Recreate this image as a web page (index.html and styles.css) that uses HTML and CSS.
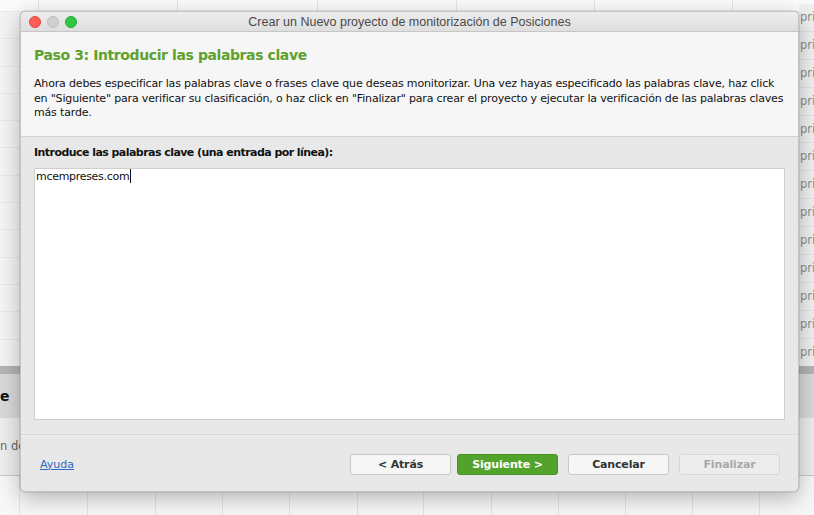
FILE: index.html
```html
<!DOCTYPE html>
<html lang="es">
<head>
<meta charset="utf-8">
<title>Crear un Nuevo proyecto de monitorización de Posiciones</title>
<link rel="stylesheet" href="styles.css">
</head>
<body>
<div class="desktop">
  <div class="bg-top">
    <span class="vline" style="left:38px"></span>
    <span class="vline" style="left:177px"></span>
    <span class="vline" style="left:317px"></span>
    <span class="vline" style="left:456px"></span>
    <span class="vline" style="left:594px"></span>
    <span class="vline" style="left:732px"></span>
  </div>
  <div class="bg-right">
    <div class="prow">pri</div><div class="prow">pri</div><div class="prow">pri</div>
    <div class="prow">pri</div><div class="prow">pri</div><div class="prow">pri</div>
    <div class="prow">pri</div><div class="prow">pri</div><div class="prow">pri</div>
    <div class="prow">pri</div><div class="prow">pri</div><div class="prow">pri</div>
    <div class="prow">pri</div>
  </div>
  <div class="bg-left">
    <div class="lrow"></div><div class="lrow"></div><div class="lrow"></div>
    <div class="lrow"></div><div class="lrow"></div><div class="lrow"></div>
    <div class="lrow"></div><div class="lrow"></div><div class="lrow"></div>
    <div class="lrow"></div><div class="lrow"></div><div class="lrow"></div>
    <div class="lrow"></div>
  </div>
  <div class="band">
    <div class="band-dark"></div>
    <div class="band-mid"><span class="band-e">e</span></div>
    <div class="band-light"><span class="band-nde">n de</span></div>
  </div>
  <div class="bg-bottom">
    <span class="vline" style="left:19px"></span>
    <span class="vline" style="left:87px"></span>
    <span class="vline" style="left:155px"></span>
    <span class="vline" style="left:222px"></span>
    <span class="vline" style="left:289px"></span>
    <span class="vline" style="left:357px"></span>
    <span class="vline" style="left:423px"></span>
    <span class="vline" style="left:491px"></span>
    <span class="vline" style="left:558px"></span>
    <span class="vline" style="left:625px"></span>
    <span class="vline" style="left:692px"></span>
    <span class="vline" style="left:759px"></span>
  </div>

  <div class="window">
    <div class="titlebar">
      <div class="lights">
        <span class="light red"></span>
        <span class="light gray"></span>
        <span class="light green"></span>
      </div>
      <div class="title">Crear un Nuevo proyecto de monitorización de Posiciones</div>
    </div>
    <div class="header">
      <h1 class="step">Paso 3: Introducir las palabras clave</h1>
      <p class="desc">Ahora debes especificar las palabras clave o frases clave que deseas monitorizar. Una vez hayas especificado las palabras clave, haz click en "Siguiente" para verificar su clasificación, o haz click en "Finalizar" para crear el proyecto y ejecutar la verificación de las palabras claves más tarde.</p>
    </div>
    <div class="content">
      <div class="label">Introduce las palabras clave (una entrada por línea):</div>
      <div class="textarea"><span class="typed">mcempreses.com</span><span class="caret"></span></div>
    </div>
    <div class="footer">
      <a class="help" href="#">Ayuda</a>
      <div class="buttons">
        <button class="btn">&lt; Atrás</button>
        <button class="btn primary">Siguiente &gt;</button>
        <button class="btn cancel">Cancelar</button>
        <button class="btn disabled">Finalizar</button>
      </div>
    </div>
  </div>
</div>
</body>
</html>
```
FILE: styles.css
```css
* { box-sizing: border-box; }
html, body { margin: 0; padding: 0; }
body {
  width: 814px;
  height: 515px;
  overflow: hidden;
  font-family: "DejaVu Sans", Verdana, sans-serif;
  background: #ffffff;
}
.desktop {
  position: relative;
  width: 814px;
  height: 515px;
  overflow: hidden;
  background: #f6f6f6;
}
.vline {
  position: absolute;
  top: 0;
  bottom: 0;
  width: 1px;
  background: #e3e3e3;
}
.bg-top {
  position: absolute;
  left: 0; top: 0; width: 814px; height: 12px;
  background: #fbfbfb;
  border-bottom: 1px solid #ececec;
}
.bg-right {
  position: absolute;
  left: 799px; top: 4px; width: 15px; height: 363px;
  display: flex;
  flex-direction: column;
  overflow: hidden;
  background: #efefef;
}
.prow {
  height: 27.9px;
  border-bottom: 1px solid #e2e2e2;
  padding-left: 1px;
  font-size: 11.5px;
  color: #8c8c8c;
  line-height: 27px;
  white-space: nowrap;
  background: #f0f0f0;
}
.bg-left {
  position: absolute;
  left: 0; top: 12px; width: 20px; height: 355px;
  display: flex;
  flex-direction: column;
}
.lrow {
  height: 27.3px;
  border-bottom: 1px solid #e8e8e8;
  background: #f4f4f4;
}
.band {
  position: absolute;
  left: 0; top: 366px; width: 814px; height: 110px;
  display: flex;
  flex-direction: column;
}
.band-dark { height: 8px; background: #b4b4b4; }
.band-mid {
  height: 44px;
  background: #d9d9d9;
  font-size: 14px;
  font-weight: bold;
  color: #111;
  line-height: 44px;
}
.band-e { margin-left: 0; }
.band-light {
  flex: 1;
  background: #ededed;
  border-bottom: 1px solid #c9c9c9;
  font-size: 11.5px;
  color: #666;
  line-height: 56px;
}
.band-nde { margin-left: 0; }
.bg-bottom {
  position: absolute;
  left: 0; top: 476px; width: 814px; height: 39px;
  background: #f7f7f7;
}

/* window */
.window {
  position: absolute;
  left: 20px;
  top: 11px;
  width: 779px;
  height: 481px;
  display: flex;
  flex-direction: column;
  background: #e8e8e8;
  border-radius: 5px;
  border: 1px solid #c4c4c4;
  box-shadow: 0 6px 22px rgba(0,0,0,0.28), 0 0 0 0.5px rgba(0,0,0,0.15);
  overflow: hidden;
}
.titlebar {
  position: relative;
  height: 20px;
  flex: none;
  background: linear-gradient(#ededed, #dedede);
  border-bottom: 1px solid #c6c6c6;
  display: flex;
  align-items: center;
}
.lights {
  display: flex;
  gap: 6px;
  padding-left: 8px;
}
.light {
  width: 12px;
  height: 12px;
  border-radius: 50%;
}
.light.red { background: #fc5d57; border: 0.5px solid #e0443e; }
.light.gray { background: #d0d0d0; border: 0.5px solid #bdbdbd; }
.light.green { background: #2fc745; border: 0.5px solid #22a836; }
.title {
  position: absolute;
  left: 0; right: 0; top: 0;
  text-align: center;
  font-family: "Liberation Sans", Arial, sans-serif;
  font-size: 12.5px;
  line-height: 20px;
  color: #4a4a4a;
}
.header {
  flex: none;
  height: 105px;
  background: #f6f6f6;
  border-bottom: 1px solid #d2d2d2;
  padding: 13px 14px 0 13px;
}
.step {
  margin: 0;
  font-size: 14px;
  font-weight: bold;
  letter-spacing: -0.4px;
  color: #5ea12e;
  line-height: 20px;
}
.desc {
  margin: 12px 0 0 0;
  font-size: 11px;
  letter-spacing: -0.17px;
  line-height: 14.5px;
  color: #111;
}
.content {
  flex: none;
  height: 298px;
  padding: 9px 13px 14px 13px;
  display: flex;
  flex-direction: column;
  border-bottom: 1px solid #d6d6d6;
}
.label {
  font-size: 11px;
  font-weight: bold;
  letter-spacing: -0.55px;
  color: #111;
  line-height: 14px;
  margin-bottom: 8px;
}
.textarea {
  flex: 1;
  background: #ffffff;
  border: 1px solid #cfcfcf;
  padding: 0 1px;
  font-size: 11px;
  letter-spacing: -0.3px;
  color: #111;
  line-height: 14px;
}
.caret {
  display: inline-block;
  width: 1px;
  height: 14px;
  margin-left: 1px;
  background: #111;
  vertical-align: -3px;
}
.footer {
  flex: 1;
  display: flex;
  align-items: center;
  justify-content: space-between;
  padding: 0 18px 0 19px;
  border-top: 1px solid #efefef;
}
.help {
  font-size: 11px;
  color: #2d68c4;
  text-decoration: underline;
  margin-top: 1px;
}
.buttons {
  display: flex;
  gap: 6px;
  margin-top: 1px;
}
.btn {
  width: 101px;
  height: 21px;
  margin: 0;
  font-family: "DejaVu Sans", Verdana, sans-serif;
  font-size: 11px;
  font-weight: bold;
  letter-spacing: -0.15px;
  color: #333;
  background: #f6f6f6;
  border: 1px solid #c9c9c9;
  border-radius: 3px;
  padding: 0;
  line-height: 19px;
}
.btn.primary {
  background: #52a22b;
  border-color: #479323;
  color: #ffffff;
  margin-right: 4px;
}
.btn.disabled {
  color: #a8a8a8;
  background: #ededed;
  border-color: #d6d6d6;
  margin-left: 4px;
}
```
